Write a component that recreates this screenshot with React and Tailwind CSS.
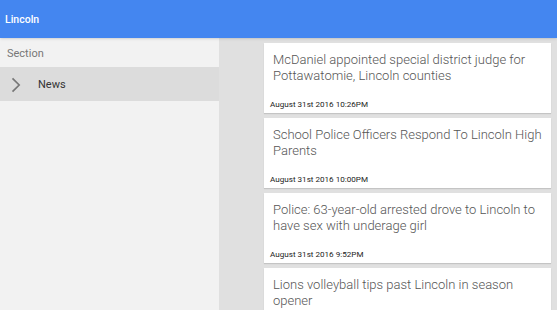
import React from "react";

const stories = [
  {
    title: "McDaniel appointed special district judge for Pottawatomie, Lincoln counties",
    date: "August 31st 2016 10:26PM",
  },
  {
    title: "School Police Officers Respond To Lincoln High Parents",
    date: "August 31st 2016 10:00PM",
  },
  {
    title: "Police: 63-year-old arrested drove to Lincoln to have sex with underage girl",
    date: "August 31st 2016 9:52PM",
  },
  {
    title: "Lions volleyball tips past Lincoln in season opener",
    date: "August 31st 2016 9:40PM",
  },
];

export default function App() {
  return (
    <div
      className="w-[557px] h-[310px] overflow-hidden flex flex-col bg-[#e0e0e0]"
      style={{ fontFamily: "Roboto, 'Liberation Sans', sans-serif" }}
    >
      {/* top bar */}
      <header className="h-[38px] shrink-0 bg-[#4486f0] flex items-center pt-[1px] px-[5px] shadow-sm z-10">
        <span className="text-white text-[10.5px] font-medium">Lincoln</span>
      </header>

      <div className="flex flex-1 min-h-0">
        {/* sidebar */}
        <aside className="w-[219px] shrink-0 bg-[#f2f2f2] flex flex-col">
          <div className="h-[29px] flex items-center pt-[4px] px-[7px] text-[11px] text-[#777]">
            Section
          </div>
          <div className="h-[34px] bg-[#dcdcdc] flex items-center pt-[2px]">
            <svg
              viewBox="0 0 24 24"
              className="w-[20px] h-[20px] ml-[5px] text-[#777]"
              fill="none"
              stroke="currentColor"
              strokeWidth="2"
            >
              <path d="M9 4l8 8-8 8" />
            </svg>
            <span className="ml-[13px] text-[11px] text-[#333]">News</span>
          </div>
        </aside>

        {/* feed */}
        <main className="flex-1 flex flex-col gap-[5px] pt-[5px] pl-[45px] pr-[6px]">
          {stories.map((s) => (
            <article
              key={s.date}
              className="h-[70px] shrink-0 bg-white shadow-[0_1px_1px_rgba(0,0,0,0.12)] flex flex-col justify-between pt-[9px] pb-[3px]"
            >
              <p className="px-[9px] text-[13px] leading-[16px] text-[#555] font-light">
                {s.title}
              </p>
              <span className="px-[6px] text-[8.1px] text-[#222]">{s.date}</span>
            </article>
          ))}
        </main>
      </div>
    </div>
  );
}
